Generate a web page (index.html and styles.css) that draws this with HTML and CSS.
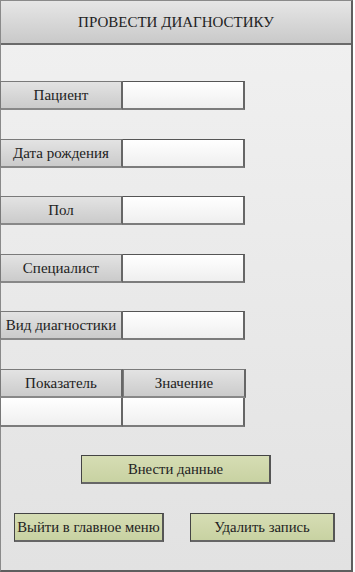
FILE: index.html
```html
<!DOCTYPE html>
<html>
<head>
    <title>Провести диагностику</title>
    <link rel="stylesheet" href="styles.css">
</head>
<body>
<div class="frame">
    <div class="header">ПРОВЕСТИ ДИАГНОСТИКУ</div>
    <div class="form">
        <div class="row">
            <div class="label">Пациент</div>
            <div class="value"></div>
        </div>
        <div class="row">
            <div class="label">Дата рождения</div>
            <div class="value"></div>
        </div>
        <div class="row">
            <div class="label">Пол</div>
            <div class="value"></div>
        </div>
        <div class="row">
            <div class="label">Специалист</div>
            <div class="value"></div>
        </div>
        <div class="row">
            <div class="label">Вид диагностики</div>
            <div class="value"></div>
        </div>
        <div class="table">
            <div class="label">Показатель</div>
            <div class="label">Значение</div>
            <div class="value"></div>
            <div class="value"></div>
        </div>
    </div>
    <div class="actions">
        <button class="btn btn-main">Внести данные</button>
        <div class="btn-row">
            <button class="btn btn-exit">Выйти в главное меню</button>
            <button class="btn btn-delete">Удалить запись</button>
        </div>
    </div>
</div>
</body>
</html>
```
FILE: styles.css
```css
body {
    margin: 0;
    padding: 0;
    font-family: "Liberation Serif", "Times New Roman", serif;
    color: #222;
    background: #fff;
}
.frame {
    box-sizing: border-box;
    width: 353px;
    height: 572px;
    border: 1px solid #8a8a8a;
    border-right: 2px solid #5e5e5e;
    border-bottom: 2px solid #5e5e5e;
    background: linear-gradient(#f1f1f1, #e2e2e2);
}
.header {
    box-sizing: border-box;
    height: 44px;
    border-bottom: 2px solid #6a6a6a;
    background: linear-gradient(#e6e6e6, #c9c9c9);
    display: flex;
    align-items: center;
    justify-content: center;
    font-size: 15px;
    padding-top: 1px;
}
.form {
    display: flex;
    flex-direction: column;
    gap: 28.6px;
    padding-top: 36px;
    margin-left: -1px;
}
.row {
    display: flex;
    height: 29px;
}
.label {
    box-sizing: border-box;
    width: 123px;
    height: 29px;
    border: 1px solid #7a7a7a;
    border-right: 2px solid #666;
    border-bottom: 2px solid #888;
    background: linear-gradient(#e3e3e3, #cbcbcb);
    display: flex;
    align-items: center;
    justify-content: center;
    font-size: 15px;
    padding-top: 1px;
}
.value {
    box-sizing: border-box;
    width: 122px;
    height: 29px;
    border: 1px solid #555;
    border-left: none;
    border-bottom: 2px solid #7c7c7c;
    border-right: 2px solid #666;
    background: linear-gradient(#ffffff, #efefef);
}
.table {
    display: grid;
    grid-template-columns: 123px 122px;
}
.table .value {
    border-top: none;
}
.table .value:nth-child(3) {
    border-left: 1px solid #777;
    width: 123px;
    border-right: 2px solid #666;
}
.actions {
    display: flex;
    flex-direction: column;
    align-items: center;
    padding-top: 28px;
    gap: 29px;
}
.btn {
    box-sizing: border-box;
    height: 29px;
    border: 1px solid #444;
    border-right: 2px solid #555;
    border-bottom: 2px solid #666;
    background: linear-gradient(#d6ddb4, #c8d2a2);
    font-family: "Liberation Serif", "Times New Roman", serif;
    font-size: 14.7px;
    color: #222;
    padding: 1px 0 0;
}
.btn-main {
    width: 190px;
}
.btn-row {
    display: flex;
    width: 100%;
    box-sizing: border-box;
    padding-left: 13px;
    gap: 26px;
}
.btn-exit {
    width: 150px;
    height: 29px;
    white-space: nowrap;
}
.btn-delete {
    width: 145px;
    height: 29px;
}
```
